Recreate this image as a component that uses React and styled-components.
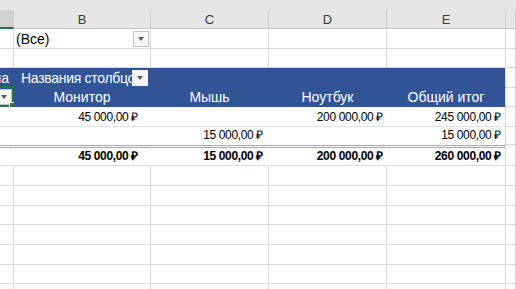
import React from 'react'
import styled, { createGlobalStyle } from 'styled-components'

const GlobalStyle = createGlobalStyle`
  html, body { margin: 0; padding: 0; background: #fff; }
  body { font-family: "Liberation Sans", Arial, sans-serif; overflow: hidden; }
`

const GRID = '#dadada'
const BLUE = '#305496'
const PALE = '#d9e1f2'
const GREEN = '#217346'

// column widths, the last column takes the rest
const COLS = [14, 137, 118, 118, 119, 0]

function App() {
    return (
        <Sheet>
            <GlobalStyle />
            <TopStrip />
            <HeaderRow>
                <ColHead $w={COLS[0]} $active />
                <ColHead $w={COLS[1]}>B</ColHead>
                <ColHead $w={COLS[2]}>C</ColHead>
                <ColHead $w={COLS[3]}>D</ColHead>
                <ColHead $w={COLS[4]}>E</ColHead>
                <ColHead />
            </HeaderRow>

            <Row $h={20}>
                <Cell $w={COLS[0]} />
                <Cell $w={COLS[1]} $pl={2}>
                    <Label>(Все)</Label>
                    <DropButton $mr={1} />
                </Cell>
                <Cell $w={COLS[2]} />
                <Cell $w={COLS[3]} />
                <Cell $w={COLS[4]} />
                <Cell />
            </Row>
            <Row $h={19}>
                {COLS.map((w, i) => <Cell key={i} $w={w} />)}
            </Row>

            <Row $h={20}>
                <Cell $w={COLS[0]} $bg={BLUE} $right={BLUE} $bottom={BLUE} $justify="flex-end" $pr={4} $color="#fff">
                    <Overflow>Сумма по полю Цена</Overflow>
                </Cell>
                <Cell $w={COLS[1]} $bg={BLUE} $right={BLUE} $bottom={BLUE} $pl={7} $color="#fff">
                    <Label $tight>Названия столбцов</Label>
                    <DropButton $mr={2} $flat />
                </Cell>
                <Cell $w={COLS[2]} $bg={BLUE} $right={BLUE} $bottom={BLUE} />
                <Cell $w={COLS[3]} $bg={BLUE} $right={BLUE} $bottom={BLUE} />
                <Cell $w={COLS[4]} $bg={BLUE} $bottom={BLUE} />
                <Cell />
            </Row>
            <Row $h={19}>
                <Cell $w={COLS[0]} $bg={BLUE} $right={BLUE} $bottom={BLUE} $clipless>
                    <DropButton $ml={-4} />
                    <Selection><FillHandle /></Selection>
                </Cell>
                <Cell $w={COLS[1]} $bg={BLUE} $right={BLUE} $bottom={BLUE} $justify="center" $color="#fff">Монитор</Cell>
                <Cell $w={COLS[2]} $bg={BLUE} $right={BLUE} $bottom={BLUE} $justify="center" $color="#fff">Мышь</Cell>
                <Cell $w={COLS[3]} $bg={BLUE} $right={BLUE} $bottom={BLUE} $justify="center" $color="#fff">Ноутбук</Cell>
                <Cell $w={COLS[4]} $bg={BLUE} $bottom={BLUE} $justify="center" $color="#fff">Общий итог</Cell>
                <Cell />
            </Row>

            <Row $h={20}>
                <Cell $w={COLS[0]} $right="#fff" $bottom={PALE} />
                <Cell $w={COLS[1]} $right="#fff" $bottom={PALE} $justify="flex-end" $pr={12}><Money>45 000,00 ₽</Money></Cell>
                <Cell $w={COLS[2]} $right="#fff" $bottom={PALE} />
                <Cell $w={COLS[3]} $right="#fff" $bottom={PALE} $justify="flex-end" $pr={3}><Money>200 000,00 ₽</Money></Cell>
                <Cell $w={COLS[4]} $bottom={PALE} $justify="flex-end" $pr={4}><Money>245 000,00 ₽</Money></Cell>
                <Cell />
            </Row>
            <Row $h={18}>
                <Cell $w={COLS[0]} $right="#fff" $bottom="#fff" />
                <Cell $w={COLS[1]} $right="#fff" $bottom="#fff" />
                <Cell $w={COLS[2]} $right="#fff" $bottom="#fff" $justify="flex-end" $pr={5}><Money>15 000,00 ₽</Money></Cell>
                <Cell $w={COLS[3]} $right="#fff" $bottom="#fff" />
                <Cell $w={COLS[4]} $bottom="#fff" $justify="flex-end" $pr={4}><Money>15 000,00 ₽</Money></Cell>
                <Cell />
            </Row>

            <TotalRow>
                <TotalCell $w={COLS[0]} $right="#fff" />
                <TotalCell $w={COLS[1]} $right="#fff" $pr={12}><Money $bold>45 000,00 ₽</Money></TotalCell>
                <TotalCell $w={COLS[2]} $right="#fff" $pr={5}><Money $bold>15 000,00 ₽</Money></TotalCell>
                <TotalCell $w={COLS[3]} $right="#fff" $pr={3}><Money $bold>200 000,00 ₽</Money></TotalCell>
                <TotalCell $w={COLS[4]} $pr={4}><Money $bold>260 000,00 ₽</Money></TotalCell>
                <Cell />
            </TotalRow>

            {[20, 20, 19, 20, 20, 19, 20].map((h, r) => (
                <Row key={r} $h={h}>
                    {COLS.map((w, i) => <Cell key={i} $w={w} />)}
                </Row>
            ))}
        </Sheet>
    )
}

export default App

const Sheet = styled.div`
    width: 516px;
    height: 289px;
    overflow: hidden;
    background: #fff;
    display: flex;
    flex-direction: column;
    font-size: 14px;
    color: #000;
`
const TopStrip = styled.div`
    flex: none;
    height: 10px;
    background: #e6e6e6;
`
const HeaderRow = styled.div`
    flex: none;
    display: flex;
    height: 19px;
    background: #e6e6e6;
`
const ColHead = styled.div`
    box-sizing: border-box;
    flex: ${p => p.$w ? `0 0 ${p.$w}px` : '1 1 auto'};
    display: flex;
    align-items: center;
    justify-content: center;
    background: ${p => p.$active ? '#d2d2d2' : '#e6e6e6'};
    border-right: 1px solid #cbcbcb;
    border-bottom: ${p => p.$active ? `2px solid ${GREEN}` : '1px solid #c4c4c4'};
    font-size: 13px;
    color: #3b3b3b;
    padding-top: 1px;
`
const Row = styled.div`
    flex: none;
    display: flex;
    height: ${p => p.$h}px;
`
const Cell = styled.div`
    position: relative;
    box-sizing: border-box;
    flex: ${p => p.$w ? `0 0 ${p.$w}px` : '1 1 auto'};
    min-width: 0;
    overflow: ${p => p.$clipless ? 'visible' : 'hidden'};
    display: flex;
    align-items: flex-end;
    justify-content: ${p => p.$justify || 'space-between'};
    padding: 0 ${p => p.$pr || 0}px 0 ${p => p.$pl || 0}px;
    background: ${p => p.$bg || '#fff'};
    border-right: 1px solid ${p => p.$right || GRID};
    border-bottom: 1px solid ${p => p.$bottom || GRID};
    color: ${p => p.$color || '#000'};
    white-space: nowrap;
    line-height: 17px;
`
const TotalRow = styled.div`
    flex: none;
    display: flex;
    height: 21px;
`
const TotalCell = styled(Cell)`
    justify-content: flex-end;
    border-top: 3px double #8ea9db;
`
const Label = styled.span`
    overflow: hidden;
    flex: 0 1 auto;
    min-width: 0;
    letter-spacing: ${p => p.$tight ? '-0.3px' : '0'};
`
// text spilling in from the left, only its tail is seen
const Overflow = styled.span`
    flex: none;
`
const Money = styled.span`
    font-size: 12px;
    font-weight: ${p => p.$bold ? 700 : 400};
    letter-spacing: -0.35px;
`
const DropButton = styled.span`
    box-sizing: border-box;
    flex: 0 0 16px;
    width: 16px;
    height: 16px;
    margin: 0 ${p => p.$mr || 0}px 0 ${p => p.$ml || 0}px;
    align-self: center;
    background: ${p => p.$flat ? '#f4f4f4' : '#f7f7f7'};
    border: 1px solid ${p => p.$flat ? '#f4f4f4' : '#c2c2c2'};
    display: flex;
    align-items: center;
    justify-content: center;

    &::after {
        content: '';
        border-left: 3.5px solid transparent;
        border-right: 3.5px solid transparent;
        border-top: 4px solid #5a5a5a;
    }
`
const Selection = styled.div`
    position: absolute;
    left: -2px;
    top: -2px;
    right: -1px;
    bottom: -1px;
    border: 2px solid ${GREEN};
    pointer-events: none;
`
const FillHandle = styled.div`
    position: absolute;
    right: -4px;
    bottom: -4px;
    width: 5px;
    height: 5px;
    background: ${GREEN};
    border: 1px solid #fff;
`
